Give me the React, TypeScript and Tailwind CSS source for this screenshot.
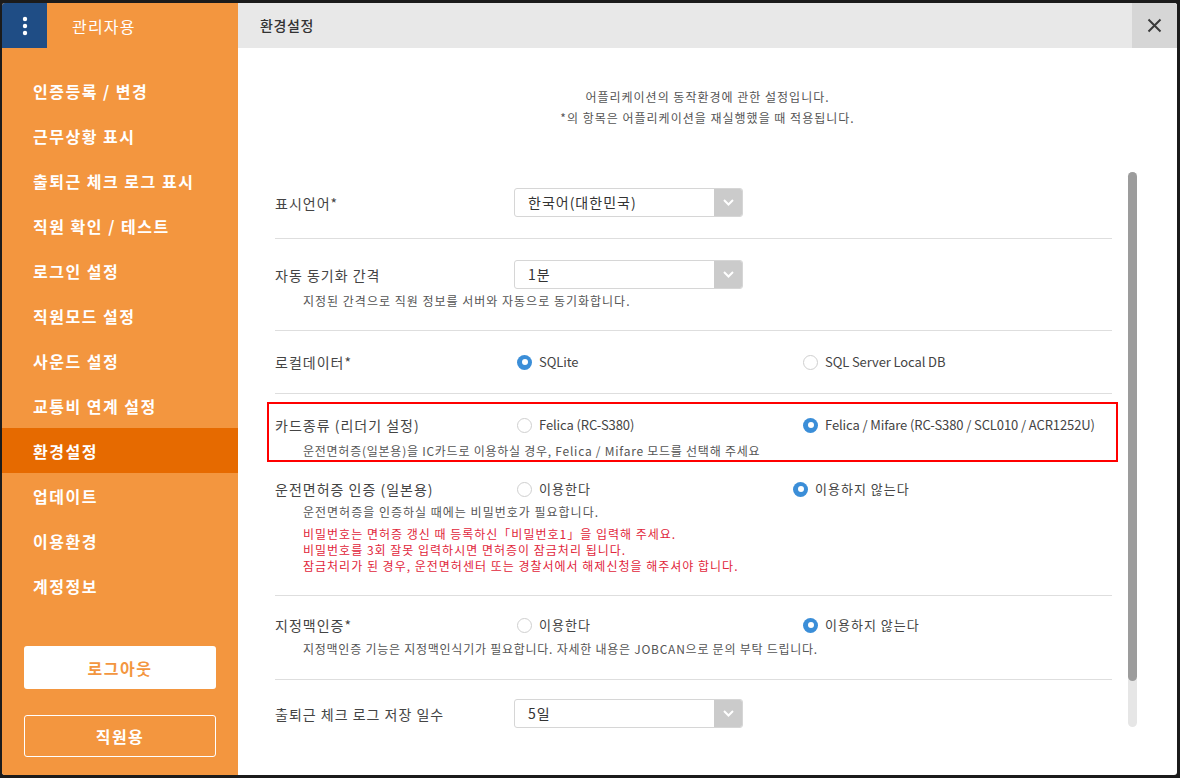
import type { ReactNode } from "react";

const MENU = [
  "인증등록 / 변경",
  "근무상황 표시",
  "출퇴근 체크 로그 표시",
  "직원 확인 / 테스트",
  "로그인 설정",
  "직원모드 설정",
  "사운드 설정",
  "교통비 연계 설정",
  "환경설정",
  "업데이트",
  "이용환경",
  "계정정보",
];

function Radio({ checked }: { checked?: boolean }) {
  if (checked) {
    return (
      <span className="flex h-[15px] w-[15px] shrink-0 items-center justify-center rounded-full bg-[#3b8ed8]">
        <span className="h-[6px] w-[6px] rounded-full bg-white" />
      </span>
    );
  }
  return <span className="h-[15px] w-[15px] shrink-0 rounded-full border border-[#cfcfcf] bg-white" />;
}

function Option({
  label,
  checked,
  width,
  hangul,
}: {
  label: string;
  checked?: boolean;
  width: string;
  hangul?: boolean;
}) {
  return (
    <div className={`flex shrink-0 items-center gap-[7px] overflow-hidden whitespace-nowrap ${width}`}>
      <Radio checked={checked} />
      <span className={`text-[13px] text-[#444] ${hangul ? "tracking-[1px]" : "tracking-[-0.1px]"}`}>{label}</span>
    </div>
  );
}

function Select({ value }: { value: string }) {
  return (
    <div className="flex h-[29px] w-[229px] overflow-hidden rounded-[3px] border border-[#d6d6d6] bg-white">
      <span className="flex flex-1 items-center pl-[13px] text-[14px] tracking-[1px] text-[#333]">{value}</span>
      <span className="flex w-[28px] items-center justify-center bg-[#cbcbcb]">
        <svg width="11" height="7" viewBox="0 0 11 7" fill="none">
          <polyline points="1,1 5.5,5.5 10,1" stroke="white" strokeWidth="2" />
        </svg>
      </span>
    </div>
  );
}

function Label({ children }: { children: ReactNode }) {
  return <div className="w-[239px] shrink-0 text-[14px] leading-[20px] tracking-[1px] text-[#444]">{children}</div>;
}

function Desc({
  children,
  className = "",
  tight,
}: {
  children: ReactNode;
  className?: string;
  tight?: boolean;
}) {
  return (
    <p
      className={`whitespace-nowrap pl-[28px] text-[12px] leading-[16px] text-[#555] ${
        tight ? "tracking-[0.75px]" : "tracking-[1px]"
      } ${className}`}
    >
      {children}
    </p>
  );
}

export default function App() {
  return (
    <div className="h-[778px] w-[1180px] bg-[#1b1b1b] pb-[3px] pl-[2px] pr-[3px] pt-[3px] font-['Noto_Sans_CJK_KR','Noto_Sans',sans-serif]">
      <div className="flex h-full w-full overflow-hidden rounded-[3px] bg-white">
        <aside className="flex w-[236px] shrink-0 flex-col bg-[#f3963f]">
          <div className="flex h-[45px] items-center">
            <div className="flex h-[45px] w-[45px] items-center justify-center bg-[#1f4d85]">
              <svg width="6" height="20" viewBox="0 0 6 20">
                <circle cx="3" cy="3" r="2.2" fill="white" />
                <circle cx="3" cy="10" r="2.2" fill="white" />
                <circle cx="3" cy="17" r="2.2" fill="white" />
              </svg>
            </div>
            <span className="ml-[25px] text-[16px] tracking-[1.2px] text-white">관리자용</span>
          </div>
          <nav className="mt-[20px] flex flex-col">
            {MENU.map((m) => (
              <div
                key={m}
                className={`flex h-[45px] items-center pl-[31px] text-[16px] font-bold tracking-[1.5px] text-white ${
                  m === "환경설정" ? "bg-[#e66a00]" : ""
                }`}
              >
                {m}
              </div>
            ))}
          </nav>
          <div className="mt-auto flex flex-col gap-[26px] px-[22px] pb-[18px]">
            <button className="h-[43px] rounded-[3px] bg-white text-[16px] font-bold tracking-[1.5px] text-[#f3963f]">
              로그아웃
            </button>
            <button className="h-[42px] rounded-[3px] border border-white text-[16px] font-bold tracking-[1.5px] text-white">
              직원용
            </button>
          </div>
        </aside>

        <main className="flex min-w-0 flex-1 flex-col">
          <header className="flex h-[45px] shrink-0 items-center bg-[#e8e8e8]">
            <h1 className="flex-1 pl-[22px] text-[14px] font-medium tracking-[0.6px] text-[#333]">환경설정</h1>
            <button className="flex h-full w-[45px] items-center justify-center bg-[#d6d6d6]">
              <svg width="15" height="15" viewBox="0 0 15 15">
                <path d="M1.5 1.5 L13.5 13.5 M13.5 1.5 L1.5 13.5" stroke="#3a3a3a" strokeWidth="2" />
              </svg>
            </button>
          </header>

          <div className="h-[124px] shrink-0 pt-[38px] text-center text-[12px] leading-[21px] tracking-[1px] text-[#555]">
            <p>어플리케이션의 동작환경에 관한 설정입니다.</p>
            <p>*의 항목은 어플리케이션을 재실행했을 때 적용됩니다.</p>
          </div>

          <div className="flex h-[572px] overflow-hidden pl-[37px]">
            <div className="w-[837px] shrink-0">
              <div className="flex items-center border-b border-[#dedede] pb-[21px] pt-[16px]">
                <Label>표시언어*</Label>
                <Select value="한국어(대한민국)" />
              </div>

              <div className="border-b border-[#dedede] pb-[21px] pt-[21px]">
                <div className="flex items-center">
                  <Label>자동 동기화 간격</Label>
                  <Select value="1분" />
                </div>
                <Desc className="mt-[4px]">지정된 간격으로 직원 정보를 서버와 자동으로 동기화합니다.</Desc>
              </div>

              <div className="flex h-[63px] items-center border-b border-[#dedede]">
                <Label>로컬데이터*</Label>
                <div className="ml-[3px] flex items-center">
                  <Option label="SQLite" checked width="w-[286px]" />
                  <Option label="SQL Server Local DB" width="w-[300px]" />
                </div>
              </div>

              <div className="-ml-[8px] -mr-[6px] mt-[8px] border-2 border-[#ff0000] pb-[1px] pl-[6px] pt-[11px]">
                <div className="flex items-center">
                  <Label>카드종류 (리더기 설정)</Label>
                  <div className="ml-[3px] flex items-center">
                    <Option label="Felica (RC-S380)" width="w-[286px]" />
                    <Option label="Felica / Mifare (RC-S380 / SCL010 / ACR1252U)" checked width="w-[300px]" />
                  </div>
                </div>
                <Desc className="mt-[8px]" tight>
                  운전면허증(일본용)을 IC카드로 이용하실 경우, Felica / Mifare 모드를 선택해 주세요
                </Desc>
              </div>

              <div className="border-b border-[#dedede] pb-[21px] pt-[17px]">
                <div className="flex items-center">
                  <Label>운전면허증 인증 (일본용)</Label>
                  <div className="ml-[3px] flex items-center">
                    <Option label="이용한다" width="w-[276px]" hangul />
                    <Option label="이용하지 않는다" checked width="w-[300px]" hangul />
                  </div>
                </div>
                <Desc className="mt-[5px]">운전면허증을 인증하실 때에는 비밀번호가 필요합니다.</Desc>
                <div className="mt-[6px] pl-[28px] text-[12px] leading-[16px] tracking-[1px] text-[#e1263b]">
                  <p>비밀번호는 면허증 갱신 때 등록하신「비밀번호1」을 입력해 주세요.</p>
                  <p>비밀번호를 3회 잘못 입력하시면 면허증이 잠금처리 됩니다.</p>
                  <p>잠금처리가 된 경우, 운전면허센터 또는 경찰서에서 해제신청을 해주셔야 합니다.</p>
                </div>
              </div>

              <div className="border-b border-[#dedede] pb-[22px] pt-[19px]">
                <div className="flex items-center">
                  <Label>지정맥인증*</Label>
                  <div className="ml-[3px] flex items-center">
                    <Option label="이용한다" width="w-[286px]" hangul />
                    <Option label="이용하지 않는다" checked width="w-[300px]" hangul />
                  </div>
                </div>
                <Desc className="mt-[6px]" tight>
                  지정맥인증 기능은 지정맥인식기가 필요합니다. 자세한 내용은 JOBCAN으로 문의 부탁 드립니다.
                </Desc>
              </div>

              <div className="pt-[19px]">
                <div className="flex items-center">
                  <Label>출퇴근 체크 로그 저장 일수</Label>
                  <Select value="5일" />
                </div>
                <Desc className="mt-[14px]">
                  설정된 일수가 지난 출퇴근 체크 로그는 단말기에서 자동으로 삭제됩니다.
                </Desc>
              </div>
            </div>

            <div className="ml-[16px] h-[555px] w-[9px] shrink-0 rounded-full bg-[#e6e6e6]">
              <div className="h-[509px] w-full rounded-full bg-[#9c9c9c]" />
            </div>
          </div>
        </main>
      </div>
    </div>
  );
}
